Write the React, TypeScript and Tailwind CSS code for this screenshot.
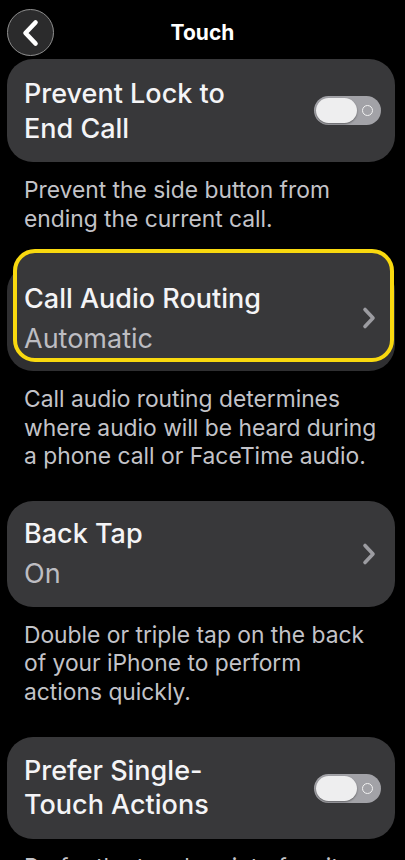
import React from "react";

const font = { fontFamily: "Inter, 'Noto Sans', 'Liberation Sans', sans-serif" };

function Toggle() {
  return (
    <div className="relative flex h-[29px] w-[67px] shrink-0 items-center rounded-full bg-[#a2a2a7] px-[2px]">
      <div className="h-[25px] w-[41px] rounded-full bg-[#eeeeef] shadow-[0_1px_2px_rgba(0,0,0,0.4)]" />
      <div className="ml-[5px] h-[11px] w-[11px] rounded-full border-[1.5px] border-[#f2f2f2]" />
    </div>
  );
}

function Chevron() {
  return (
    <svg width="16" height="24" viewBox="0 0 16 24" className="shrink-0">
      <path d="M4 3.5 L12 12 L4 20.5" fill="none" stroke="#9c9ca1" strokeWidth="3.6" strokeLinecap="round" strokeLinejoin="round" />
    </svg>
  );
}

function Footnote({ children, className = "" }: { children: React.ReactNode; className?: string }) {
  return (
    <p className={"pl-[24px] pr-[8px] text-[22.8px] leading-[28.5px] text-[#c3c3c8] " + className}>{children}</p>
  );
}

export default function App() {
  return (
    <div className="h-[860px] w-[405px] overflow-hidden bg-black text-white" style={font}>
      {/* Header */}
      <div className="flex h-[59px] items-start px-[7px] pt-[9px]">
        <div className="flex h-[47px] w-[47px] items-center justify-center rounded-full border border-[#8f8f8f] bg-[#2b2b2c]">
          <svg width="20" height="30" viewBox="0 0 20 30">
            <path d="M14.5 4.5 L4.5 15 L14.5 25.5" fill="none" stroke="#ffffff" strokeWidth="4.6" strokeLinecap="round" strokeLinejoin="round" />
          </svg>
        </div>
        <div className="flex h-[47px] flex-1 items-center justify-center text-[21px] font-bold">Touch</div>
        <div className="w-[47px]" />
      </div>

      {/* Card 1 */}
      <div className="ml-[7px] mr-[10px] flex h-[103px] items-center justify-between rounded-[26px] bg-[#38383a] pl-[17px] pr-[14px]">
        <div className="text-[27px] font-medium leading-[35px] text-[#f4f4f6]">
          Prevent Lock to
          <br />
          End Call
        </div>
        <Toggle />
      </div>
      <Footnote className="mt-[14px]">
        Prevent the side button from
        <br />
        ending the current call.
      </Footnote>

      {/* Card 2 (highlighted) */}
      <div className="relative ml-[7px] mr-[10px] mt-[32px] flex h-[106px] items-center justify-between rounded-[26px] bg-[#2f2f31] pl-[17px] pr-[18px]">
        <div className="absolute left-[6px] top-[-16px] h-[113px] w-[381px] rounded-[22px] border-[4px] border-[#f9d90f] bg-[#38383a]" />
        <div className="relative flex flex-col gap-[6px] pt-[2px]">
          <div className="text-[27px] font-medium leading-[34px] text-[#f4f4f6]">Call Audio Routing</div>
          <div className="text-[27px] leading-[34px] text-[#bdbdc2]">Automatic</div>
        </div>
        <div className="relative">
          <Chevron />
        </div>
      </div>
      <Footnote className="mt-[14px]">
        Call audio routing determines
        <br />
        where audio will be heard during
        <br />a phone call or FaceTime audio.
      </Footnote>

      {/* Card 3 */}
      <div className="ml-[7px] mr-[10px] mt-[30px] flex h-[106px] items-center justify-between rounded-[26px] bg-[#38383a] pl-[17px] pr-[18px]">
        <div className="flex flex-col gap-[6px]">
          <div className="text-[27px] font-medium leading-[34px] text-[#f4f4f6]">Back Tap</div>
          <div className="text-[27px] leading-[34px] text-[#bdbdc2]">On</div>
        </div>
        <Chevron />
      </div>
      <Footnote className="mt-[14px]">
        Double or triple tap on the back
        <br />
        of your iPhone to perform
        <br />
        actions quickly.
      </Footnote>

      {/* Card 4 */}
      <div className="ml-[7px] mr-[10px] mt-[31px] flex h-[102px] items-center justify-between rounded-[26px] bg-[#38383a] pl-[17px] pr-[14px]">
        <div className="text-[27px] font-medium leading-[34px] text-[#f4f4f6]">
          Prefer Single-
          <br />
          Touch Actions
        </div>
        <Toggle />
      </div>
      <Footnote className="mt-[14px]">
        Prefer the touch point of an item
        <br />
        to perform actions.
      </Footnote>
    </div>
  );
}
